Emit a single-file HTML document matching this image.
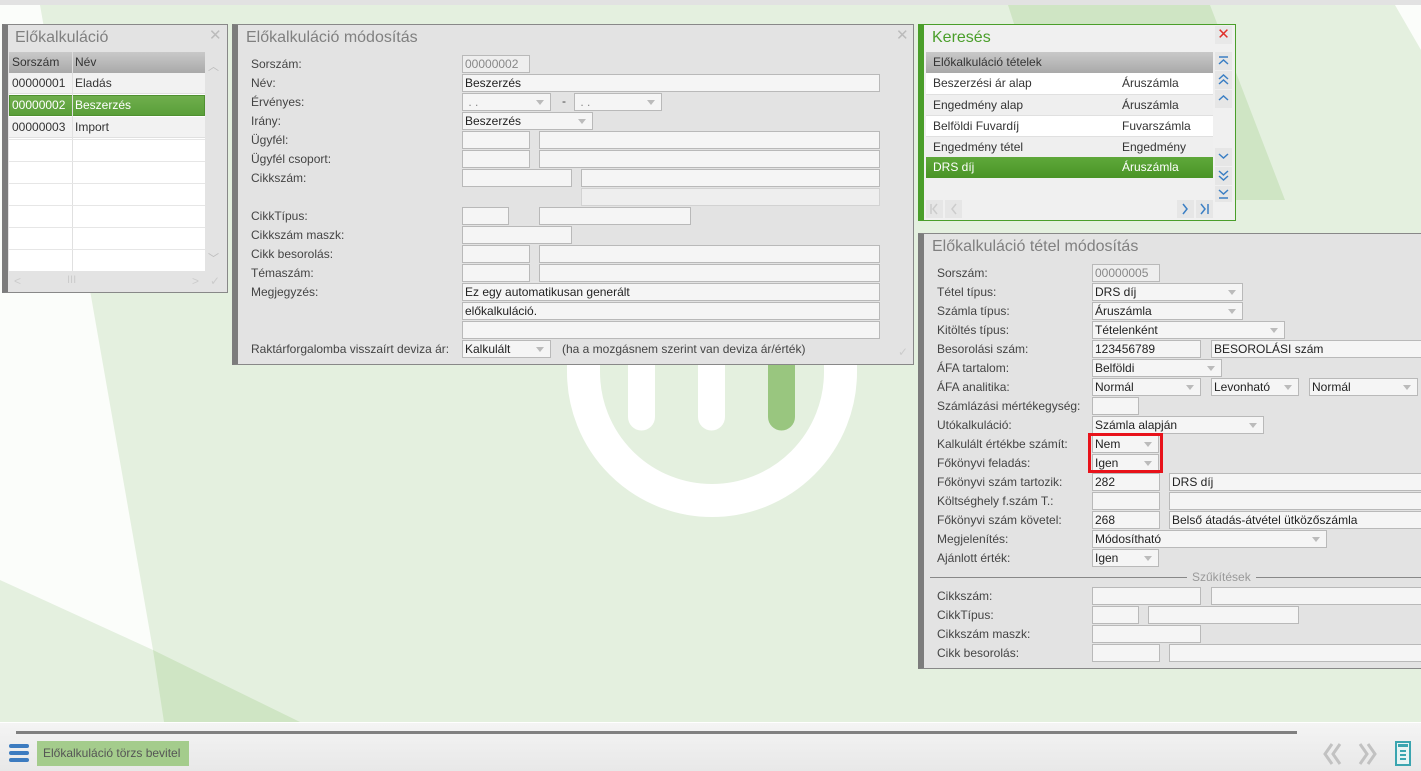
<!DOCTYPE html>
<html><head><meta charset="utf-8">
<style>
*{box-sizing:border-box;margin:0;padding:0}
body{width:1421px;height:771px;overflow:hidden;position:relative;background:#e4f0df;font-family:"Liberation Sans",Arial,sans-serif;font-size:12px;color:#333}
.a{position:absolute}
.panel{position:absolute;background:#e3e3e3;border:1px solid #888;border-left:6px solid #7c7c7c}
.title{position:absolute;font-size:16px;color:#808080;white-space:nowrap}
.lbl{position:absolute;white-space:nowrap;color:#444;line-height:17px}
.in{position:absolute;height:18px;background:#f5f5f5;border:1px solid #b9b9b9;line-height:16px;padding-left:2px;white-space:nowrap;overflow:hidden;color:#222}
.sel::after{content:"";position:absolute;right:6px;top:6px;border-left:4px solid transparent;border-right:4px solid transparent;border-top:5px solid #bbb}
.ro{color:#888;background:#eee}
.row{position:absolute;height:21px;line-height:21px;white-space:nowrap}
</style></head><body>
<div class="a" style="left:0;top:0;width:1421px;height:5px;background:#e2e2e2"></div>
<svg class="a" style="left:0;top:5px" width="1421" height="717" viewBox="0 5 1421 717">
<polygon points="0,5 40,5 153,650 0,580" fill="#fbfdfa"/>
<polygon points="153,650 300,722 164,722" fill="#cfe5c4"/>
<polygon points="1008,5 1210,5 1285,200 1070,200" fill="#cfe5c4"/>
<polygon points="1395,5 1421,5 1421,50" fill="#fbfdfa"/>
<path d="M583.5,200 V372 A128.5,128.5 0 0 0 840.5,372 V200" fill="none" stroke="#fff" stroke-width="33"/>
<line x1="641.5" y1="300" x2="641.5" y2="417" stroke="#fff" stroke-width="27" stroke-linecap="round"/>
<line x1="711.5" y1="300" x2="711.5" y2="417" stroke="#fff" stroke-width="27" stroke-linecap="round"/>
<line x1="781.5" y1="300" x2="781.5" y2="417" stroke="#99c67f" stroke-width="27" stroke-linecap="round"/>
</svg>

<!-- Panel 1 -->
<div class="panel" style="left:2px;top:24px;width:226px;height:269px"></div>
<div class="title" style="left:15px;top:29px">Előkalkuláció</div>
<div class="a" style="left:209px;top:26px;color:#bbb;font-size:15px">✕</div>
<div class="a" style="left:9px;top:52px;width:196px;height:21px;background:linear-gradient(#c9c9c9,#a9a9a9)"></div>
<div class="a" style="left:12px;top:52px;line-height:21px;color:#333">Sorszám</div>
<div class="a" style="left:72px;top:52px;width:1px;height:21px;background:#ddd"></div>
<div class="a" style="left:75px;top:52px;line-height:21px;color:#333">Név</div>
<div class="a" style="left:9px;top:73px;width:196px;height:198px;background:#fff"></div>
<div class="row" style="left:9px;top:73px;width:196px;background:#f2f2f2;border-bottom:1px solid #e0e0e0"><span style="position:absolute;left:3px">00000001</span><span style="position:absolute;left:66px">Eladás</span></div>
<div class="row" style="left:9px;top:95px;width:196px;background:linear-gradient(#6fae4d,#5a9f3a);color:#fff;border:1px solid #4f9030"><span style="position:absolute;left:2px;top:-1px">00000002</span><span style="position:absolute;left:65px;top:-1px">Beszerzés</span></div>
<div class="row" style="left:9px;top:117px;width:196px;background:#f2f2f2;border-bottom:1px solid #e0e0e0"><span style="position:absolute;left:3px">00000003</span><span style="position:absolute;left:66px">Import</span></div>
<div class="a" style="left:72px;top:73px;width:1px;height:198px;background:#e0e0e0"></div>
<div class="a" style="left:9px;top:139px;width:196px;height:1px;background:#e6e6e6"></div>
<div class="a" style="left:9px;top:161px;width:196px;height:1px;background:#e6e6e6"></div>
<div class="a" style="left:9px;top:183px;width:196px;height:1px;background:#e6e6e6"></div>
<div class="a" style="left:9px;top:205px;width:196px;height:1px;background:#e6e6e6"></div>
<div class="a" style="left:9px;top:227px;width:196px;height:1px;background:#e6e6e6"></div>
<div class="a" style="left:9px;top:249px;width:196px;height:1px;background:#e6e6e6"></div>
<div class="a" style="left:208px;top:58px;color:#bbb;font-size:11px">︿</div>
<div class="a" style="left:208px;top:250px;color:#bbb;font-size:11px">﹀</div>
<div class="a" style="left:14px;top:274px;color:#ccc;font-size:12px">&lt;</div>
<div class="a" style="left:67px;top:274px;color:#ccc;font-size:11px">III</div>
<div class="a" style="left:192px;top:274px;color:#ccc;font-size:12px">&gt;</div>
<div class="a" style="left:210px;top:274px;color:#ccc;font-size:12px">✓</div>

<!-- Panel 2 -->
<div class="panel" style="left:232px;top:24px;width:682px;height:341px"></div>
<div class="title" style="left:246px;top:29px">Előkalkuláció módosítás</div>
<div class="a" style="left:896px;top:26px;color:#bbb;font-size:15px">✕</div>
<div class="lbl" style="left:251px;top:56px">Sorszám:</div>
<div class="lbl" style="left:251px;top:75px">Név:</div>
<div class="lbl" style="left:251px;top:94px">Érvényes:</div>
<div class="lbl" style="left:251px;top:113px">Irány:</div>
<div class="lbl" style="left:251px;top:132px">Ügyfél:</div>
<div class="lbl" style="left:251px;top:151px">Ügyfél csoport:</div>
<div class="lbl" style="left:251px;top:170px">Cikkszám:</div>
<div class="lbl" style="left:251px;top:208px">CikkTípus:</div>
<div class="lbl" style="left:251px;top:227px">Cikkszám maszk:</div>
<div class="lbl" style="left:251px;top:246px">Cikk besorolás:</div>
<div class="lbl" style="left:251px;top:265px">Témaszám:</div>
<div class="lbl" style="left:251px;top:284px">Megjegyzés:</div>
<div class="lbl" style="left:251px;top:341px">Raktárforgalomba visszaírt deviza ár:</div>
<div class="in ro" style="left:462px;top:55px;width:68px">00000002</div>
<div class="in" style="left:462px;top:74px;width:418px">Beszerzés</div>
<div class="in sel" style="left:462px;top:93px;width:89px;color:#888">&nbsp;. .</div>
<div class="lbl" style="left:562px;top:93px">-</div>
<div class="in sel" style="left:574px;top:93px;width:88px;color:#888">&nbsp;. .</div>
<div class="in sel" style="left:462px;top:112px;width:131px">Beszerzés</div>
<div class="in" style="left:462px;top:131px;width:68px"></div>
<div class="in" style="left:539px;top:131px;width:341px"></div>
<div class="in" style="left:462px;top:150px;width:68px"></div>
<div class="in" style="left:539px;top:150px;width:341px"></div>
<div class="in" style="left:462px;top:169px;width:110px"></div>
<div class="in" style="left:581px;top:169px;width:299px"></div>
<div class="in ro" style="left:581px;top:188px;width:299px;border-color:#d2d2d2"></div>
<div class="in" style="left:462px;top:207px;width:47px"></div>
<div class="in" style="left:539px;top:207px;width:152px"></div>
<div class="in" style="left:462px;top:226px;width:110px"></div>
<div class="in" style="left:462px;top:245px;width:68px"></div>
<div class="in" style="left:539px;top:245px;width:341px"></div>
<div class="in" style="left:462px;top:264px;width:68px"></div>
<div class="in" style="left:539px;top:264px;width:341px"></div>
<div class="in" style="left:462px;top:283px;width:418px">Ez egy automatikusan generált</div>
<div class="in" style="left:462px;top:302px;width:418px">előkalkuláció.</div>
<div class="in" style="left:462px;top:321px;width:418px"></div>
<div class="in sel" style="left:462px;top:340px;width:89px">Kalkulált</div>
<div class="lbl" style="left:562px;top:341px">(ha a mozgásnem szerint van deviza ár/érték)</div>
<div class="a" style="left:898px;top:345px;color:#ccc">✓</div>

<!-- Panel 3 Keresés -->
<div class="a" style="left:918px;top:24px;width:318px;height:197px;background:#f0f0f0;border:1px solid #4a9e2a;border-left:6px solid #4a9e2a"></div>
<div class="title" style="left:932px;top:29px;color:#4a9e2a">Keresés</div>
<div class="a" style="left:1215px;top:26px;width:17px;height:18px;background:#e8e8e8;color:#e0312b;font-size:15px;text-align:center;line-height:18px">✕</div>
<div class="a" style="left:926px;top:52px;width:287px;height:21px;background:linear-gradient(#c9c9c9,#a9a9a9);line-height:21px;padding-left:7px">Előkalkuláció tételek</div>
<div class="row" style="left:926px;top:73px;width:287px;background:#fff"><span style="position:absolute;left:7px">Beszerzési ár alap</span><span style="position:absolute;left:196px">Áruszámla</span></div>
<div class="row" style="left:926px;top:94px;width:287px;background:#efefef;border-top:1px solid #e0e0e0"><span style="position:absolute;left:7px">Engedmény alap</span><span style="position:absolute;left:196px">Áruszámla</span></div>
<div class="row" style="left:926px;top:115px;width:287px;background:#fff;border-top:1px solid #e0e0e0"><span style="position:absolute;left:7px">Belföldi Fuvardíj</span><span style="position:absolute;left:196px">Fuvarszámla</span></div>
<div class="row" style="left:926px;top:136px;width:287px;background:#efefef;border-top:1px solid #e0e0e0"><span style="position:absolute;left:7px">Engedmény tétel</span><span style="position:absolute;left:196px">Engedmény</span></div>
<div class="row" style="left:926px;top:157px;width:287px;background:linear-gradient(#5fa83a,#4a9426);color:#fff"><span style="position:absolute;left:7px">DRS díj</span><span style="position:absolute;left:196px">Áruszámla</span></div>
<svg class="a" style="left:1215px;top:52px" width="17" height="150" viewBox="0 0 17 150" fill="none" stroke="#3b7fc4" stroke-width="1.5">
<rect x="0" y="0" width="17" height="18" fill="#e6e6e6" stroke="none"/>
<rect x="0" y="19" width="17" height="18" fill="#e6e6e6" stroke="none"/>
<rect x="0" y="38" width="17" height="18" fill="#e6e6e6" stroke="none"/>
<rect x="0" y="96" width="17" height="18" fill="#e6e6e6" stroke="none"/>
<rect x="0" y="115" width="17" height="18" fill="#e6e6e6" stroke="none"/>
<rect x="0" y="134" width="17" height="16" fill="#e6e6e6" stroke="none"/>
<path d="M4,5 H13 M4,12 L8.5,8 L13,12"/>
<path d="M4,27 L8.5,23 L13,27 M4,32 L8.5,28 L13,32"/>
<path d="M4,48 L8.5,44 L13,48"/>
<path d="M4,102 L8.5,106 L13,102"/>
<path d="M4,119 L8.5,123 L13,119 M4,124 L8.5,128 L13,124"/>
<path d="M4,138 L8.5,142 L13,138 M4,146 H13"/>
</svg>
<svg class="a" style="left:926px;top:200px" width="287" height="18" fill="none" stroke-width="1.5">
<rect x="0" y="0" width="17" height="18" fill="#e6e6e6"/>
<rect x="19" y="0" width="17" height="18" fill="#e6e6e6"/>
<rect x="251" y="0" width="17" height="18" fill="#e6e6e6"/>
<rect x="270" y="0" width="17" height="18" fill="#e6e6e6"/>
<path d="M5,4 V14 M11,4 L7,9 L11,14" stroke="#ccc"/>
<path d="M30,4 L26,9 L30,14" stroke="#ccc"/>
<path d="M257,4 L261,9 L257,14" stroke="#3b7fc4"/>
<path d="M275,4 L279,9 L275,14 M282,4 V14" stroke="#3b7fc4"/>
</svg>

<!-- Panel 4 -->
<div class="panel" style="left:918px;top:233px;width:510px;height:436px"></div>
<div class="title" style="left:932px;top:238px">Előkalkuláció tétel módosítás</div>
<div class="lbl" style="left:937px;top:265px">Sorszám:</div>
<div class="lbl" style="left:937px;top:284px">Tétel típus:</div>
<div class="lbl" style="left:937px;top:303px">Számla típus:</div>
<div class="lbl" style="left:937px;top:322px">Kitöltés típus:</div>
<div class="lbl" style="left:937px;top:341px">Besorolási szám:</div>
<div class="lbl" style="left:937px;top:360px">ÁFA tartalom:</div>
<div class="lbl" style="left:937px;top:379px">ÁFA analitika:</div>
<div class="lbl" style="left:937px;top:398px">Számlázási mértékegység:</div>
<div class="lbl" style="left:937px;top:417px">Utókalkuláció:</div>
<div class="lbl" style="left:937px;top:436px">Kalkulált értékbe számít:</div>
<div class="lbl" style="left:937px;top:455px">Főkönyvi feladás:</div>
<div class="lbl" style="left:937px;top:474px">Főkönyvi szám tartozik:</div>
<div class="lbl" style="left:937px;top:493px">Költséghely f.szám T.:</div>
<div class="lbl" style="left:937px;top:512px">Főkönyvi szám követel:</div>
<div class="lbl" style="left:937px;top:531px">Megjelenítés:</div>
<div class="lbl" style="left:937px;top:550px">Ajánlott érték:</div>
<div class="a" style="left:930px;top:577px;width:491px;height:1px;background:#888"></div>
<div class="lbl" style="left:1187px;top:569px;background:#e3e3e3;color:#999;padding:0 5px">Szűkítések</div>
<div class="lbl" style="left:937px;top:588px">Cikkszám:</div>
<div class="lbl" style="left:937px;top:607px">CikkTípus:</div>
<div class="lbl" style="left:937px;top:626px">Cikkszám maszk:</div>
<div class="lbl" style="left:937px;top:645px">Cikk besorolás:</div>
<div class="in ro" style="left:1092px;top:264px;width:68px">00000005</div>
<div class="in sel" style="left:1092px;top:283px;width:151px">DRS díj</div>
<div class="in sel" style="left:1092px;top:302px;width:151px">Áruszámla</div>
<div class="in sel" style="left:1092px;top:321px;width:193px">Tételenként</div>
<div class="in" style="left:1092px;top:340px;width:109px">123456789</div>
<div class="in" style="left:1211px;top:340px;width:215px">BESOROLÁSI szám</div>
<div class="in sel" style="left:1092px;top:359px;width:130px">Belföldi</div>
<div class="in sel" style="left:1092px;top:378px;width:109px">Normál</div>
<div class="in sel" style="left:1211px;top:378px;width:88px">Levonható</div>
<div class="in sel" style="left:1309px;top:378px;width:109px">Normál</div>
<div class="in" style="left:1092px;top:397px;width:47px"></div>
<div class="in sel" style="left:1092px;top:416px;width:172px">Számla alapján</div>
<div class="in sel" style="left:1092px;top:435px;width:67px">Nem</div>
<div class="in sel" style="left:1092px;top:454px;width:67px">Igen</div>
<div class="a" style="left:1088px;top:433px;width:75px;height:40px;border:3px solid #e8121a"></div>
<div class="in" style="left:1092px;top:473px;width:68px">282</div>
<div class="in" style="left:1169px;top:473px;width:257px">DRS díj</div>
<div class="in" style="left:1092px;top:492px;width:68px"></div>
<div class="in" style="left:1169px;top:492px;width:257px"></div>
<div class="in" style="left:1092px;top:511px;width:68px">268</div>
<div class="in" style="left:1169px;top:511px;width:257px">Belső átadás-átvétel ütközőszámla</div>
<div class="in sel" style="left:1092px;top:530px;width:235px">Módosítható</div>
<div class="in sel" style="left:1092px;top:549px;width:67px">Igen</div>
<div class="in" style="left:1092px;top:587px;width:109px"></div>
<div class="in" style="left:1211px;top:587px;width:215px"></div>
<div class="in" style="left:1092px;top:606px;width:47px"></div>
<div class="in" style="left:1148px;top:606px;width:151px"></div>
<div class="in" style="left:1092px;top:625px;width:109px"></div>
<div class="in" style="left:1092px;top:644px;width:68px"></div>
<div class="in" style="left:1169px;top:644px;width:257px"></div>

<!-- Bottom bar -->
<div class="a" style="left:0;top:722px;width:1421px;height:49px;background:linear-gradient(#f4f4f4,#e8e8e8);border-top:1px solid #fff"></div>
<div class="a" style="left:16px;top:731px;width:1281px;height:3px;background:#808080"></div>
<svg class="a" style="left:9px;top:743px" width="21" height="20"><rect x="0" y="1" width="20" height="4" rx="2" fill="#3d7cc0"/><rect x="0" y="8" width="20" height="4" rx="2" fill="#3d7cc0"/><rect x="0" y="15" width="20" height="4" rx="2" fill="#3d7cc0"/></svg>
<div class="a" style="left:37px;top:741px;width:152px;height:25px;background:#a4cc8c;color:#555;font-size:12px;line-height:25px;padding-left:6px;white-space:nowrap;overflow:hidden">Előkalkuláció törzs bevitel</div>
<svg class="a" style="left:1322px;top:742px" width="60" height="24" fill="none" stroke="#c2c2c2" stroke-width="3"><path d="M10,2 L3,12 L10,22 M18,2 L11,12 L18,22"/><path d="M38,2 L45,12 L38,22 M46,2 L53,12 L46,22"/></svg>
<svg class="a" style="left:1395px;top:741px" width="16" height="25"><rect x="1" y="1" width="14" height="23" fill="#e8f4f4" stroke="#3aa5b0" stroke-width="2"/><rect x="3" y="3" width="10" height="3" fill="#3aa5b0"/><rect x="5" y="9" width="6" height="2" fill="#3aa5b0"/><rect x="5" y="13" width="6" height="2" fill="#3aa5b0"/><rect x="5" y="17" width="6" height="2" fill="#3aa5b0"/></svg>
</body></html>
